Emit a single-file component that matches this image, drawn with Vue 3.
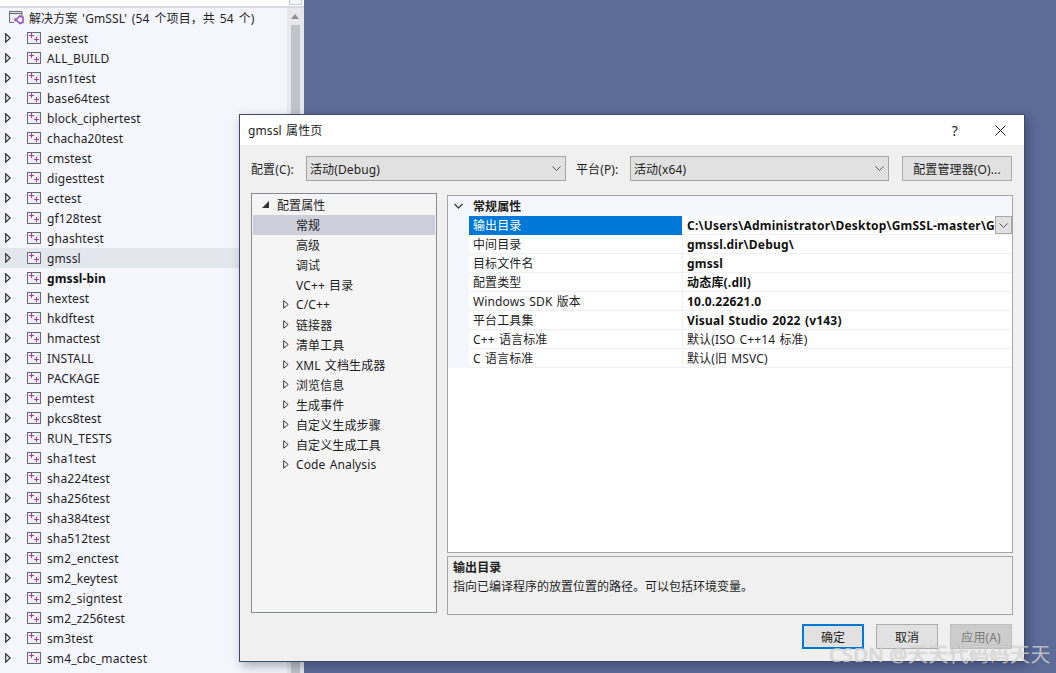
<script setup>
const projects = ['aestest','ALL_BUILD','asn1test','base64test','block_ciphertest','chacha20test','cmstest','digesttest','ectest','gf128test','ghashtest','gmssl','gmssl-bin','hextest','hkdftest','hmactest','INSTALL','PACKAGE','pemtest','pkcs8test','RUN_TESTS','sha1test','sha224test','sha256test','sha384test','sha512test','sm2_enctest','sm2_keytest','sm2_signtest','sm2_z256test','sm3test','sm4_cbc_mactest']
const plainTree = ['常规','高级','调试','VC++ 目录']
const branchTree = ['C/C++','链接器','清单工具','XML 文档生成器','浏览信息','生成事件','自定义生成步骤','自定义生成工具','Code Analysis']
const props = [
  ['输出目录','C:\\Users\\Administrator\\Desktop\\GmSSL-master\\G',true],
  ['中间目录','gmssl.dir\\Debug\\',true],
  ['目标文件名','gmssl',true],
  ['配置类型','动态库(.dll)',true],
  ['Windows SDK 版本','10.0.22621.0',true],
  ['平台工具集','Visual Studio 2022 (v143)',true],
  ['C++ 语言标准','默认(ISO C++14 标准)',false],
  ['C 语言标准','默认(旧 MSVC)',false]
]
</script>

<template>
  <div class="desktop">
    <aside class="explorer">
      <div class="topstrip"><div class="toolbtn"></div></div>
      <div class="explorer-body">
        <div class="tree">
          <div class="sol-row">
            <svg class="sol-icon" width="15" height="14" viewBox="0 0 15 14">
              <path d="M5 11.500H.5V.5h12.500v5" fill="#f1f1f5" stroke="#6a6a72"/>
              <path d="M.5 2.500h12.500" stroke="#6a6a72" stroke-width="1.200"/>
              <path d="M5.500 7.500l5.500 5 3-1.300V6.300L11 5 5.500 10" fill="none" stroke="#8f4fc0" stroke-width="1.600"/>
            </svg>
            <span>解决方案 'GmSSL' (54 个项目，共 54 个)</span>
          </div>
          <div v-for="p in projects" :key="p" class="proj" :class="{ hot: p === 'gmssl', bold: p === 'gmssl-bin' }">
            <svg class="arrow" width="6" height="10" viewBox="0 0 6 10"><path d="M.7.800l4.500 4.200-4.500 4.200z" fill="none" stroke="#333" stroke-width="1.200"/></svg>
            <svg class="proj-icon" width="14" height="12" viewBox="0 0 14 12">
              <rect x="0.500" y="0.500" width="13" height="11" fill="#eeeef3" stroke="#6a6a72"/>
              <path d="M4.500 1v5M2 3.500h5M9.500 5v5M7 7.500h5" stroke="#a33fb5" stroke-width="1" fill="none"/>
            </svg>
            <span>{{ p }}</span>
          </div>
        </div>
        <div class="scrollbar">
          <div class="scroll-up"></div>
          <div class="thumb"></div>
        </div>
      </div>
    </aside>

    <section class="dialog">
      <header class="titlebar">
        <span class="title">gmssl 属性页</span>
        <span class="help">?</span>
        <svg class="close" width="11" height="11" viewBox="0 0 11 11"><path d="M.5.500l10 10M10.500.500l-10 10" stroke="#222" fill="none"/></svg>
      </header>
      <div class="dlg-body">
        <div class="config-row">
          <label class="lbl1">配置(C):</label>
          <div class="select s1"><span>活动(Debug)</span><svg width="9" height="5" viewBox="0 0 9 5"><path d="M.5.500l4 4 4-4" fill="none" stroke="#555"/></svg></div>
          <label class="lbl2">平台(P):</label>
          <div class="select s2"><span>活动(x64)</span><svg width="9" height="5" viewBox="0 0 9 5"><path d="M.5.500l4 4 4-4" fill="none" stroke="#555"/></svg></div>
          <button class="btn mgr">配置管理器(O)...</button>
        </div>

        <div class="main">
          <nav class="nav">
            <div class="nav-row root">
              <svg class="nav-tri" width="7" height="7" viewBox="0 0 7 7"><path d="M7 0v7H0z" fill="#333"/></svg>
              <span>配置属性</span>
            </div>
            <div v-for="(n, i) in plainTree" :key="n" class="nav-row child" :class="{ sel: i === 0 }">{{ n }}</div>
            <div v-for="n in branchTree" :key="n" class="nav-row branch">
              <svg class="nav-arrow" width="6" height="9" viewBox="0 0 6 9"><path d="M.7.800l4.500 3.700-4.500 3.700z" fill="none" stroke="#333"/></svg>
              <span>{{ n }}</span>
            </div>
          </nav>
          <div class="right">
            <div class="grid">
              <div class="grid-head">
                <svg class="chev" width="9" height="6" viewBox="0 0 9 6"><path d="M.5 1l4 4 4-4" fill="none" stroke="#444" stroke-width="1.400"/></svg>
                <span>常规属性</span>
              </div>
              <div class="grid-rows">
                <div v-for="(r, i) in props" :key="r[0]" class="prop" :class="{ active: i === 0 }">
                  <div class="pname">{{ r[0] }}</div>
                  <div class="pval" :class="{ strong: r[2] }">{{ r[1] }}</div>
                  <div v-if="i === 0" class="dd"><svg width="9" height="5" viewBox="0 0 9 5"><path d="M.5.500l4 4 4-4" fill="none" stroke="#555"/></svg></div>
                </div>
              </div>
            </div>
            <div class="desc">
              <strong>输出目录</strong>
              <p>指向已编译程序的放置位置的路径。可以包括环境变量。</p>
            </div>
          </div>
        </div>

        <footer class="footer">
          <button class="btn act primary">确定</button>
          <button class="btn act">取消</button>
          <button class="btn act disabled">应用(A)</button>
        </footer>
      </div>
    </section>

    <div class="watermark">CSDN @天天代码码天天</div>
  </div>
</template>

<style>
html, body { margin: 0; padding: 0; }
</style>

<style scoped>
.desktop {
  position: relative;
  width: 1056px;
  height: 673px;
  overflow: hidden;
  background: #5d6b99;
  font-family: "Noto Sans", "Noto Sans CJK SC", sans-serif;
  font-size: 12px;
  letter-spacing: .12px;
  word-spacing: 1px;
  color: #1e1e1e;
}
.explorer {
  width: 304px;
  height: 673px;
  background: #f5f6fd;
  overflow: hidden;
  display: flex;
  flex-direction: column;
}
.topstrip {
  height: 8px;
  flex: none;
  background: #ffffff;
  border-bottom: 2px solid #d5d8e4;
  box-sizing: border-box;
  display: flex;
  justify-content: flex-end;
  padding-right: 2px;
}
.toolbtn {
  width: 13px;
  height: 5px;
  box-sizing: border-box;
  border: 1px solid #c6cad8;
  border-top: 0;
  background: #f5f6fd;
}
.explorer-body { flex: 1; display: flex; min-height: 0; }
.tree { flex: 1; min-width: 0; }
.sol-row, .proj {
  height: 20px;
  display: flex;
  align-items: center;
  white-space: nowrap;
}
.sol-row { word-spacing: 1.600px; }
.sol-icon { margin-left: 9px; margin-right: 5px; flex: none; }
.proj.hot { background: #e4e6ee; }
.proj.bold { font-weight: 700; color: #111; }
.arrow { margin-left: 5px; flex: none; }
.proj-icon { margin-left: 16px; margin-right: 6px; flex: none; }
.scrollbar {
  width: 17px;
  background: #e8e8ec;
  flex: none;
  display: flex;
  flex-direction: column;
  align-items: center;
  padding-right: 1px;
  box-sizing: border-box;
}
.scroll-up {
  margin-top: 6px;
  width: 0; height: 0;
  border-left: 4px solid transparent;
  border-right: 4px solid transparent;
  border-bottom: 5px solid #8e8f96;
}
.thumb { margin-top: 6px; width: 9px; flex: 1; background: #c2c3c9; }

.dialog {
  position: absolute;
  left: 239px;
  top: 114px;
  width: 786px;
  height: 548px;
  box-sizing: border-box;
  border: 1px solid #3f4a66;
  background: #f0f0f0;
  box-shadow: 3px 4px 10px rgba(20, 25, 50, .35);
  display: flex;
  flex-direction: column;
}
.titlebar {
  height: 30px;
  flex: none;
  background: #ffffff;
  display: flex;
  align-items: center;
  padding-left: 8px;
  padding-right: 18px;
}
.title { flex: 1; font-size: 12px; }
.help { font-size: 14px; margin-right: 37px; }
.dlg-body { flex: 1; display: flex; flex-direction: column; padding: 11px 11px 0 11px; min-height: 0; }
.config-row { display: flex; align-items: center; height: 25px; }
.lbl1 { width: 55px; flex: none; }
.lbl2 { width: 54px; flex: none; margin-left: 10px; }
.select {
  height: 25px;
  box-sizing: border-box;
  border: 1px solid #a5a5a5;
  background: #e1e1e1;
  display: flex;
  align-items: center;
  justify-content: space-between;
  padding: 0 4px 0 3px;
  flex: none;
}
.s1 { width: 260px; }
.s2 { width: 259px; }
.btn {
  font: inherit;
  letter-spacing: inherit;
  color: #1e1e1e;
  background: #e1e1e1;
  border: 1px solid #adadad;
  padding: 0;
  height: 25px;
  box-sizing: border-box;
}
.mgr { width: 110px; margin-left: 13px; }
.main { display: flex; gap: 10px; margin-top: 12px; }
.nav {
  width: 186px;
  height: 420px;
  box-sizing: border-box;
  border: 1px solid #868a91;
  background: #f5f5f5;
  padding: 1px;
  flex: none;
}
.nav-row { height: 20px; box-sizing: border-box; padding-bottom: 1px; display: flex; align-items: center; white-space: nowrap; }
.nav-tri { margin-left: 9px; margin-right: 8px; }
.child { padding-left: 43px; }
.child.sel { background: #ccced9; }
.nav-arrow { margin-left: 30px; margin-right: 7px; }
.right { width: 566px; margin-top: 2px; display: flex; flex-direction: column; gap: 3px; }
.grid {
  height: 358px;
  box-sizing: border-box;
  border: 1px solid #a5a5a5;
  background: #fff;
}
.grid-head {
  height: 20px;
  background: #f3f6fb;
  display: flex;
  align-items: center;
  font-weight: 700;
}
.chev { margin-left: 6px; margin-right: 10px; }
.grid-rows { background: #f3f6fb; padding-left: 21px; }
.prop {
  position: relative;
  display: flex;
  height: 19px;
  box-sizing: border-box;
  background: #fff;
  border-bottom: 1px solid #eff1f6;
  align-items: center;
}
.pname { width: 214px; padding-left: 4px; box-sizing: border-box; flex: none; border-right: 1px solid #eff1f6; height: 100%; display: flex; align-items: center; }
.active .pname { background: #0078d7; color: #fff; height: 19px; }
.pval { flex: 1; min-width: 0; white-space: nowrap; padding-left: 4px; }
.pval.strong { font-weight: 700; color: #111; letter-spacing: .2px; }
.dd {
  position: absolute;
  right: 0;
  top: 0;
  width: 17px;
  height: 18px;
  box-sizing: border-box;
  border: 1px solid #a8a8a8;
  background: #e1e1e1;
  display: flex;
  align-items: center;
  justify-content: center;
}
.desc {
  height: 59px;
  box-sizing: border-box;
  border: 1px solid #a5a5a5;
  padding: 2px 5px;
  background: #f0f0f0;
}
.desc strong { display: block; line-height: 17px; font-weight: 700; }
.desc p { margin: 2px 0 0; line-height: 17px; letter-spacing: 0; }
.footer { display: flex; justify-content: flex-end; gap: 12px; margin-top: 9px; padding-right: 1px; }
.act { width: 62px; }
.primary { border: 2px solid #0078d7; }
.disabled { background: #cccccc; border-color: #bfbfbf; color: #7a7a7a; }
.watermark {
  position: absolute;
  left: 829px;
  top: 643px;
  font-size: 20px;
  line-height: 24px;
  letter-spacing: .4px;
  word-spacing: 0;
  white-space: nowrap;
  color: rgba(255, 255, 255, .62);
  text-shadow: 0 0 1px rgba(80, 80, 80, .5);
}
</style>
